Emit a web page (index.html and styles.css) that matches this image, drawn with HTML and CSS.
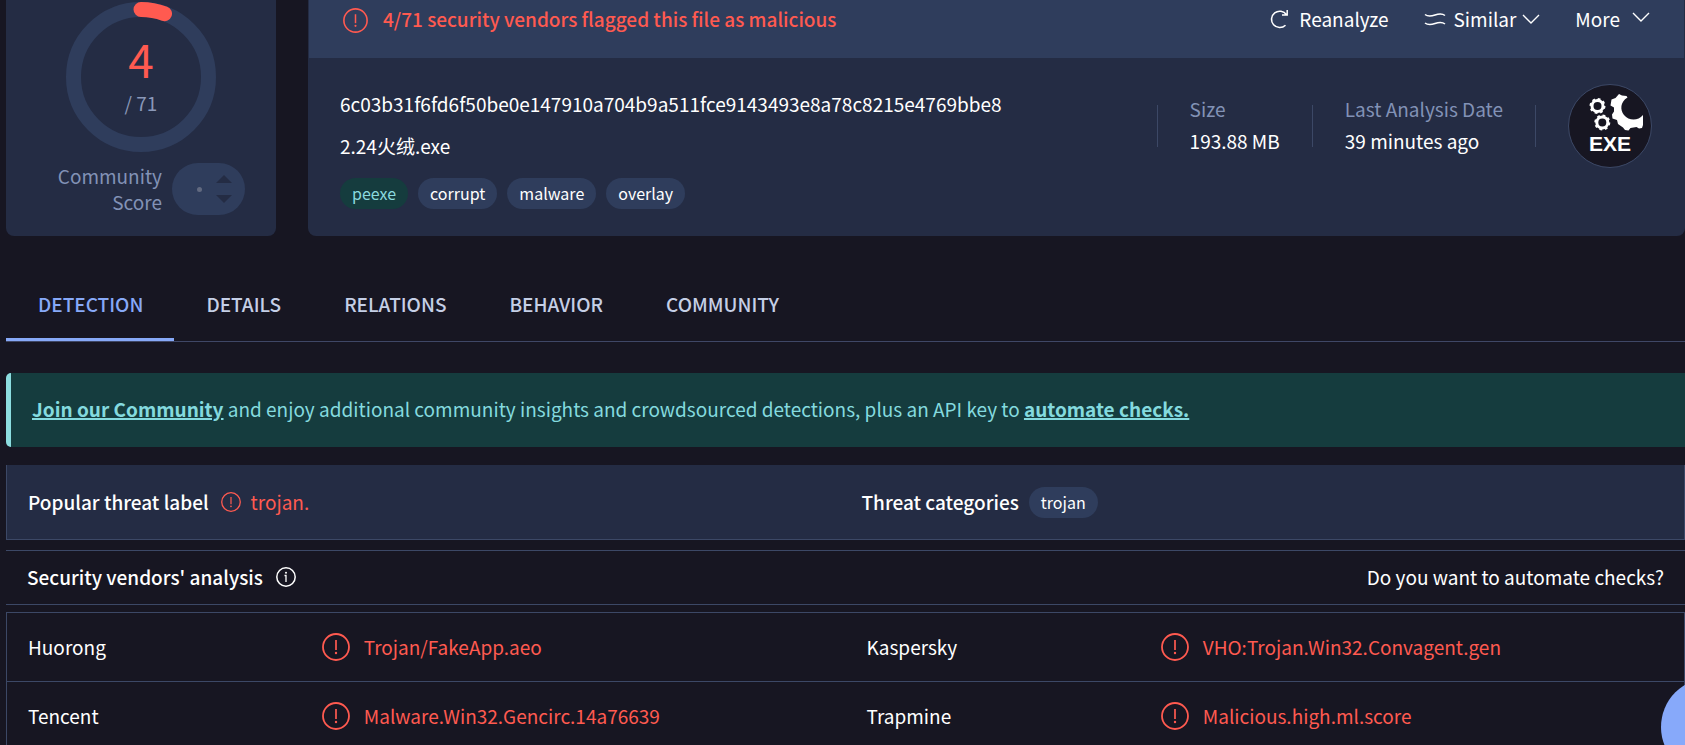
FILE: index.html
```
<!DOCTYPE html>
<html lang="en">
  <head>
    <meta charset="UTF-8">
    <meta name="viewport" content="width=device-width, initial-scale=1">
    <title>File report - 2.24火绒.exe</title>
    <link rel="stylesheet" href="styles.css">
  </head>
  <body>
    <!-- shared icons -->
    <svg class="sprite" aria-hidden="true">
      <symbol id="alert" viewBox="0 0 28 28">
        <circle cx="14" cy="14" r="13" fill="none" stroke="currentColor" stroke-width="1.8"/>
        <path d="M14 7v10" fill="none" stroke="currentColor" stroke-width="1.7"/>
        <circle cx="14" cy="20" r="1.2" fill="currentColor"/>
      </symbol>
      <symbol id="chevron" viewBox="0 0 18 10">
        <path d="M1 1l8 8 8-8" fill="none" stroke="currentColor" stroke-width="1.4"/>
      </symbol>
    </svg>

    <main class="report">
      <div class="summary">
        <section class="score-card">
          <div class="ring">
            <svg viewBox="0 0 150 150" aria-hidden="true">
              <circle cx="75" cy="75" r="67.5" fill="none" stroke="#2f3d5c" stroke-width="15"/>
              <path d="M75 7.5A67.5 67.5 0 0 1 98.5 11.7" fill="none" stroke="#ff5a50" stroke-width="15" stroke-linecap="round"/>
            </svg>
            <div class="ring-text">
              <span class="positives">4</span>
              <span class="total">/ 71</span>
            </div>
          </div>
          <div class="community">
            <span class="community-label">Community Score</span>
            <div class="votes">
              <span class="vote-dot"></span>
              <svg width="16" height="28" viewBox="0 0 16 28" aria-hidden="true">
                <path d="M0 8l8-8 8 8zM0 20h16l-8 8z" fill="#242c44"/>
              </svg>
            </div>
          </div>
        </section>

        <section class="file-card">
          <header class="file-header">
            <svg class="icon-md red"><use href="#alert"/></svg>
            <strong class="verdict">4/71 security vendors flagged this file as malicious</strong>
            <div class="actions">
              <button type="button" class="action">
                <svg class="icon-reload" viewBox="0 0 18 20"><path d="M15.5 16.200A8.200 8.200 0 1 1 16.500 5.700M17.200 1v5H12" fill="none" stroke="currentColor" stroke-width="1.500"/></svg>
                Reanalyze
              </button>
              <button type="button" class="action similar">
                <svg class="icon-similar" viewBox="0 0 22 14"><path d="M1 2.500c3 2.500 6 2 10 .5s7-2 10 .5M1 11c3 2.500 6 2 10 .5s7-2 10 .5" fill="none" stroke="currentColor" stroke-width="1.500"/></svg>
                Similar
                <svg class="icon-chevron"><use href="#chevron"/></svg>
              </button>
              <button type="button" class="action more">
                More
                <svg class="icon-chevron"><use href="#chevron"/></svg>
              </button>
            </div>
          </header>
          <div class="file-body">
            <div class="file-info">
              <div class="hash">6c03b31f6fd6f50be0e147910a704b9a511fce9143493e8a78c8215e4769bbe8</div>
              <div class="filename">2.24火绒.exe</div>
              <div class="tags">
                <a href="#peexe" class="tag tag-green">peexe</a>
                <a href="#corrupt" class="tag">corrupt</a>
                <a href="#malware" class="tag">malware</a>
                <a href="#overlay" class="tag">overlay</a>
              </div>
            </div>
            <div class="facts">
              <span class="divider"></span>
              <dl class="fact">
                <dt>Size</dt>
                <dd>193.88 MB</dd>
              </dl>
              <span class="divider"></span>
              <dl class="fact">
                <dt>Last Analysis Date</dt>
                <dd>39 minutes ago</dd>
              </dl>
              <span class="divider"></span>
              <div class="filetype">
                <svg class="filetype-icon" viewBox="8 17 84 38" aria-hidden="true">
                  <g fill="none" stroke="#fff">
                    <circle cx="37.5" cy="30" r="5.500" stroke-width="3"/>
                    <circle cx="37.5" cy="30" r="7" stroke-width="2" stroke-dasharray="2.750 2.750"/>
                    <circle cx="42.3" cy="46.500" r="5.500" stroke-width="3"/>
                    <circle cx="42.3" cy="46.500" r="7" stroke-width="2" stroke-dasharray="2.750 2.750"/>
                  </g>
                  <path d="M59 18l3 1.500 4.500.5 1 1.500C60 26 60 34 64 39c5 6 14 6 19 0v10l-1 3-3 .5-2.500-1.500-6 1-2 2.500-3.500-.5-2-2.500L58 48l-1-4-4.500-1.500-.5-4 2-3v-4l-3.500-2 1-6 4-1.500z" fill="#fff"/>
                </svg>
                <span class="filetype-name">EXE</span>
              </div>
            </div>
          </div>
        </section>
      </div>

      <nav class="tabs">
        <a href="#detection" class="tab active">DETECTION</a>
        <a href="#details" class="tab">DETAILS</a>
        <a href="#relations" class="tab">RELATIONS</a>
        <a href="#behavior" class="tab">BEHAVIOR</a>
        <a href="#community" class="tab">COMMUNITY</a>
      </nav>

      <p class="banner"><a href="#join">Join our Community</a> and enjoy additional community insights and crowdsourced detections, plus an API key to <a href="#api">automate checks.</a></p>

      <section class="threat">
        <div class="threat-item threat-label">
          <strong>Popular threat label</strong>
          <svg class="icon-sm red"><use href="#alert"/></svg>
          <span class="red">trojan.</span>
        </div>
        <div class="threat-item">
          <strong>Threat categories</strong>
          <a href="#trojan" class="tag">trojan</a>
        </div>
      </section>

      <section class="vendors-header">
        <h2>Security vendors' analysis</h2>
        <svg class="icon-info" viewBox="0 0 20 20">
          <circle cx="10" cy="10" r="9.200" fill="none" stroke="currentColor" stroke-width="1.500"/>
          <path d="M8.500 8.500H10V15" fill="none" stroke="currentColor" stroke-width="1.300"/>
          <circle cx="10" cy="5.800" r="1" fill="currentColor"/>
        </svg>
        <a href="#automate" class="automate">Do you want to automate checks?</a>
      </section>

      <table class="vendors">
        <tr>
          <th scope="row">Huorong</th>
          <td><span class="detection"><svg class="icon-lg"><use href="#alert"/></svg>Trojan/FakeApp.aeo</span></td>
          <th scope="row">Kaspersky</th>
          <td><span class="detection"><svg class="icon-lg"><use href="#alert"/></svg>VHO:Trojan.Win32.Convagent.gen</span></td>
        </tr>
        <tr>
          <th scope="row">Tencent</th>
          <td><span class="detection"><svg class="icon-lg"><use href="#alert"/></svg>Malware.Win32.Gencirc.14a76639</span></td>
          <th scope="row">Trapmine</th>
          <td><span class="detection"><svg class="icon-lg"><use href="#alert"/></svg>Malicious.high.ml.score</span></td>
        </tr>
      </table>
    </main>

    <button type="button" class="chat" aria-label="Open chat"></button>
  </body>
</html>
```
FILE: styles.css
```
* {
  box-sizing: border-box;
}
html {
  scrollbar-width: none;
}
body {
  margin: 0;
  background: #171622;
  color: #fff;
  font: 19px/26px "Noto Sans CJK SC", "Noto Sans", sans-serif;
}
a {
  color: inherit;
  text-decoration: none;
}
button {
  border: 0;
  padding: 0;
  background: none;
  color: inherit;
  font: inherit;
  cursor: pointer;
}
strong {
  font-weight: 500;
}
.sprite {
  display: none;
}
.report {
  padding-left: 6px;
}
.red {
  color: #ff5a50;
}
.icon-sm {
  width: 20px;
  height: 20px;
}
.icon-md {
  width: 25px;
  height: 25px;
}
.icon-lg {
  width: 28px;
  height: 28px;
}

/* top cards */
.summary {
  display: flex;
  gap: 32px;
}
.score-card {
  width: 270px;
  padding: 2px 31px 21px;
  background: #242c44;
  border-radius: 0 0 8px 8px;
}
.ring {
  display: grid;
  width: 150px;
  height: 150px;
  margin: 0 auto;
}
.ring svg,
.ring-text {
  grid-area: 1 / 1;
}
.ring-text {
  display: flex;
  flex-direction: column;
  align-items: center;
  justify-content: center;
  gap: 4px;
  padding-bottom: 8px;
}
.positives {
  color: #ff5a50;
  font-size: 46px;
  line-height: 56px;
}
.total {
  color: #8a98b8;
}
.community {
  display: flex;
  align-items: center;
  justify-content: flex-end;
  gap: 10px;
  margin-top: 11px;
}
.community-label {
  width: 110px;
  color: #8292b6;
  text-align: right;
}
.votes {
  display: flex;
  align-items: center;
  justify-content: flex-end;
  gap: 14px;
  width: 73px;
  height: 52px;
  padding-right: 13px;
  border-radius: 26px;
  background: #2f3d5c;
}
.vote-dot {
  width: 5px;
  height: 5px;
  border-radius: 50%;
  background: #626a80;
}
.file-card {
  flex: 1;
  background: #242c44;
  border-radius: 0 0 8px 8px;
}
.file-header {
  display: flex;
  align-items: center;
  height: 58px;
  margin: 0 1px;
  padding: 0 34px 18px;
  background: #2f3d5c;
}
.verdict {
  margin-left: 15px;
  padding-bottom: 2px;
  color: #ff5a50;
}
.actions {
  display: flex;
  gap: 35px;
  margin-left: auto;
  padding-bottom: 2px;
}
.action {
  display: flex;
  align-items: center;
}
.icon-reload {
  width: 18px;
  height: 20px;
  margin-right: 11px;
}
.icon-similar {
  width: 22px;
  height: 14px;
  margin-right: 8px;
}
.icon-chevron {
  width: 18px;
  height: 10px;
}
.similar .icon-chevron {
  margin-left: 6px;
}
.more .icon-chevron {
  margin: 0 0 4px 12px;
}
.file-body {
  display: flex;
  align-items: flex-start;
  padding: 25px 33px 27px 32px;
}
.file-info {
  flex: 1;
}
.hash,
.filename {
  line-height: 42px;
}
.tags {
  display: flex;
  gap: 10px;
  margin-top: 11px;
}
.tag {
  padding: 0 12px;
  border-radius: 16px;
  background: #2f3d5c;
  font-size: 16px;
  line-height: 31px;
}
.tag-green {
  background: #153c3e;
  color: #8ad9de;
}
.facts {
  display: flex;
  align-items: center;
  gap: 32px;
  margin-top: 1px;
}
.divider {
  width: 1px;
  height: 42px;
  background: #3c4866;
}
.fact {
  margin: 0;
  padding-bottom: 2px;
}
.fact dt {
  color: #8292b6;
}
.fact dd {
  margin: 6px 0 0;
}
.filetype {
  display: flex;
  flex-direction: column;
  align-items: center;
  width: 84px;
  height: 84px;
  padding-top: 8px;
  border: 1px solid #3c4866;
  border-radius: 50%;
  background: #171622;
}
.filetype-icon {
  width: 84px;
  height: 38px;
}
.filetype-name {
  font: 700 21px/26px "Liberation Sans", Arial, sans-serif;
}

/* tabs */
.tabs {
  display: flex;
  margin-top: 32px;
  border-bottom: 1px solid #3f4766;
}
.tab {
  padding: 23px 31px 21px 32px;
  border-bottom: 3px solid transparent;
  color: #c5cfe6;
  font-weight: 500;
}
.tab.active {
  border-color: #87a9f8;
  color: #87a9f8;
}

.banner {
  margin: 31px 0 18px;
  padding: 23px 21px 25px;
  border-left: 5px solid #8cdde0;
  border-radius: 5px 0 0 5px;
  background: #153c3e;
  color: #84dadf;
}
.banner a {
  font-weight: 700;
  text-decoration: underline;
  text-decoration-thickness: 2px;
}

/* threat label row */
.threat {
  display: grid;
  grid-template-columns: 1fr 1fr;
  height: 75px;
  border: 1px solid #3c4866;
  border-top: 0;
  background: #242c44;
}
.threat-item {
  display: flex;
  align-items: center;
  gap: 10px;
  padding-left: 16px;
}
.threat-label {
  padding-left: 21px;
}
.threat-label .icon-sm {
  margin-left: 2px;
}

.vendors-header {
  display: flex;
  align-items: center;
  height: 55px;
  margin: 10px 0 7px;
  padding: 0 21px 2px;
  border: 1px solid #3c4866;
  border-width: 1px 0;
}
.vendors-header h2 {
  margin: 0;
  font-size: 19px;
  font-weight: 500;
}
.icon-info {
  width: 20px;
  height: 20px;
  margin-left: 13px;
}
.automate {
  margin-left: auto;
}

/* vendor results */
.vendors {
  width: 100%;
  border: 1px solid #3c4866;
  border-collapse: collapse;
  table-layout: fixed;
}
.vendors tr {
  height: 69px;
  border-bottom: 1px solid #3c4866;
}
.vendors th {
  width: 17%;
  padding: 0 21px;
  font-weight: 400;
  text-align: left;
}
.vendors td {
  padding: 0 30px;
}
.detection {
  display: flex;
  align-items: center;
  gap: 14px;
  color: #ff5a50;
}

.chat {
  position: fixed;
  right: -74px;
  bottom: -31px;
  width: 98px;
  height: 98px;
  border-radius: 50%;
  background: #87a9fa;
}
```
